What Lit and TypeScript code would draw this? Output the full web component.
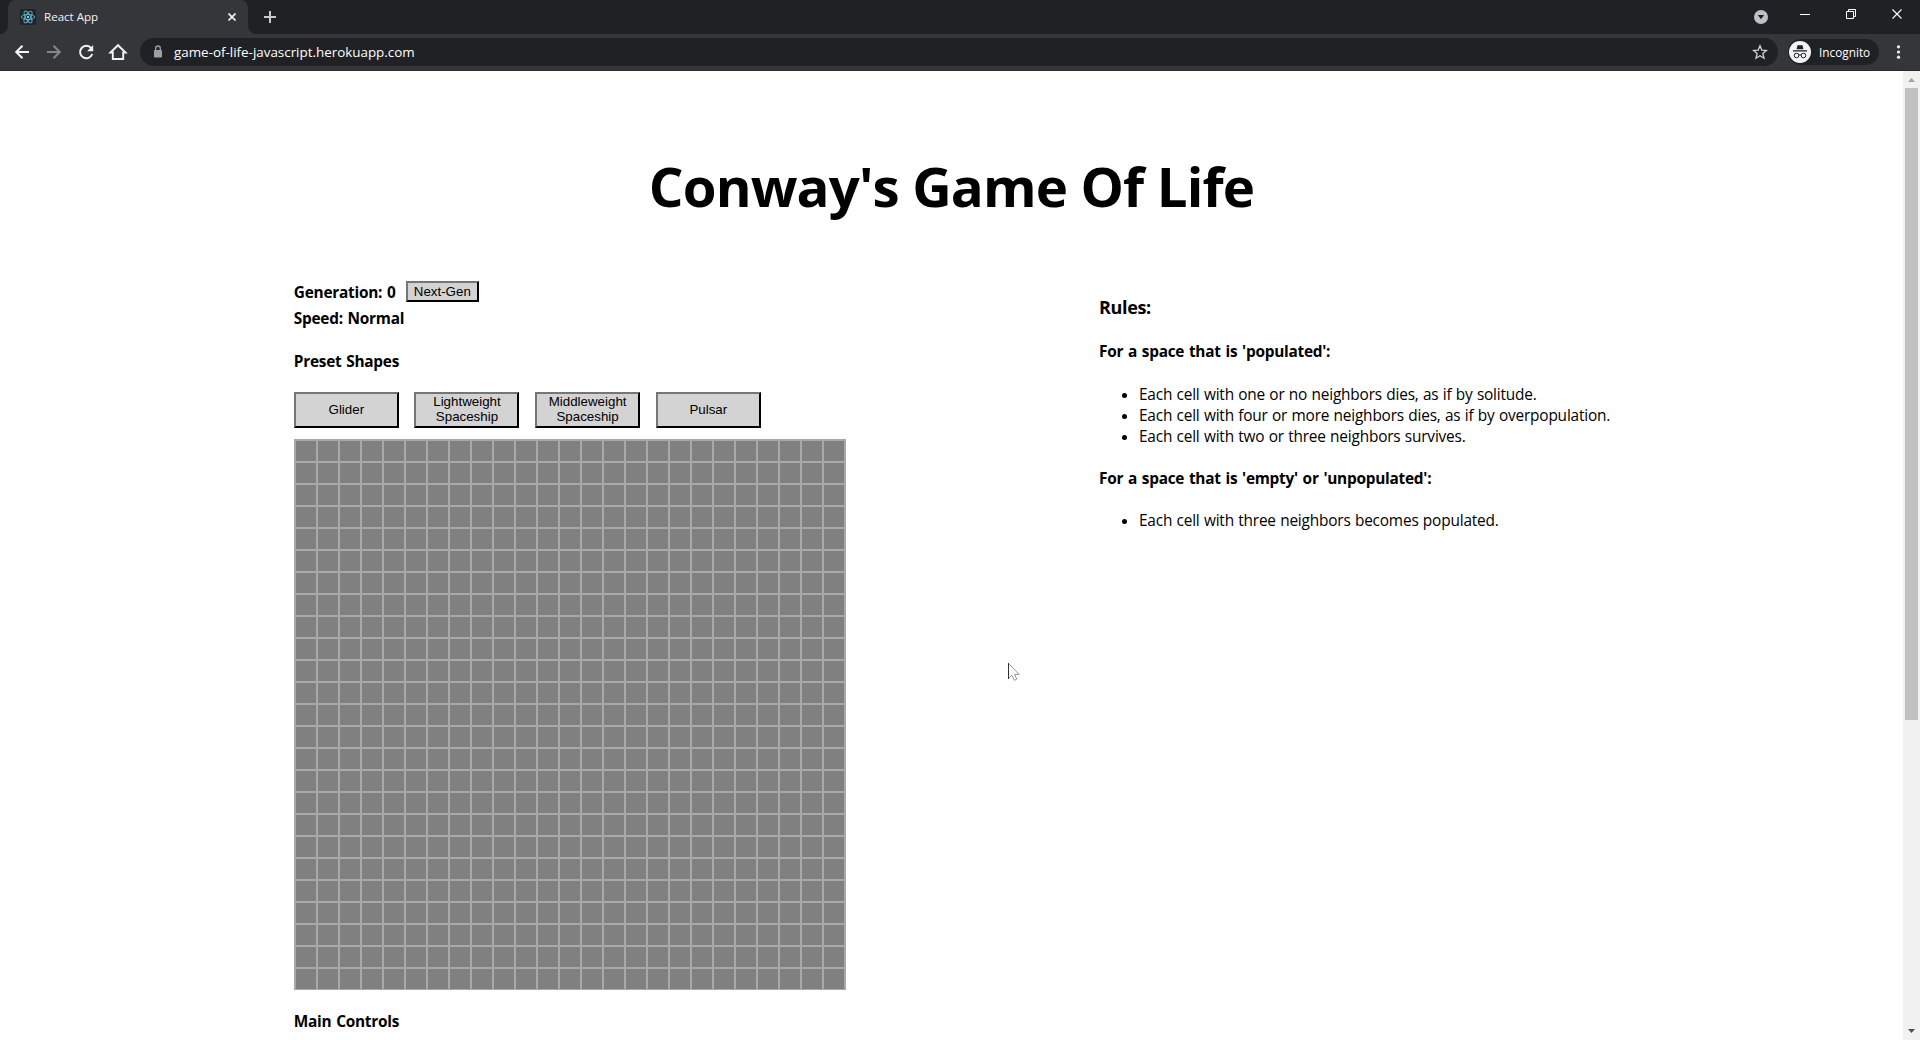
import { LitElement, html, css, svg } from "lit";
import { customElement } from "lit/decorators.js";

const SIZE = 25;

@customElement("browser-bar")
class BrowserBar extends LitElement {
  static styles = css`
    :host { display: block; font-family: "Open Sans", "Noto Sans", sans-serif; color: #fff; }
    svg { display: block; flex: none; }
    .tabs { height: 34px; background: #202124; display: flex; align-items: stretch; }
    .tab { width: 240px; margin-left: 8px; background: #35363a; border-radius: 8px 8px 0 0; display: flex; align-items: center; box-sizing: border-box; padding: 0 12px; position: relative; }
    .tab::before, .tab::after { content: ""; position: absolute; bottom: 0; width: 8px; height: 8px; }
    .tab::before { left: -8px; background: radial-gradient(circle at 0 0, #202124 7.5px, #35363a 8.5px); }
    .tab::after { right: -8px; background: radial-gradient(circle at 100% 0, #202124 7.5px, #35363a 8.5px); }
    .title { margin-left: 8px; flex: 1; font-size: 11.6px; line-height: 16px; letter-spacing: -0.02px; color: #f1f3f4; }
    .plus { align-self: center; margin-left: 15px; }
    .spacer { flex: 1; }
    .bar { height: 37px; background: #35363a; display: flex; align-items: center; box-sizing: border-box; padding: 0 0 1px 12px; box-shadow: inset 0 -1px #2b2a2d; }
    .nav { display: flex; gap: 12px; }
    .address { flex: none; margin-left: 12px; width: 1638px; height: 28px; box-sizing: border-box; border-radius: 14px; background: #202124; display: flex; align-items: center; padding: 0 10px 0 8px; }
    .url { flex: 1; margin-left: 6px; font-size: 13.4px; line-height: 18px; }
    .profile { flex: none; margin-left: 10px; width: 91px; height: 26px; box-sizing: border-box; border-radius: 13px; background: #202124; display: flex; align-items: center; padding-left: 1px; font-size: 11.8px; }
    .who { margin-left: 8px; line-height: 16px; }
    .more { margin-left: 8px; }
  `;
  render() {
    return html`
      <div class="tabs">
        <div class="tab">
          <svg width="16" height="16" viewBox="0 0 16 16">
            <rect width="16" height="16" rx="2" fill="#20232a" />
            <g fill="none" stroke="#61b5cf" stroke-width="0.9">
              ${[0, 60, 120].map((a) => svg`<ellipse cx="8" cy="8" rx="6.6" ry="2.6" transform=${`rotate(${a} 8 8)`} />`)}
            </g>
            <circle cx="8" cy="8" r="1.2" fill="#7fd6f0" />
          </svg>
          <span class="title">React App</span>
          <svg width="8" height="8" viewBox="0 0 8 8"><path d="M.5.5l7 7M7.5.5l-7 7" stroke="#f1f3f4" stroke-width="1.6" /></svg>
        </div>
        <svg class="plus" width="14" height="14" viewBox="0 0 14 14"><path d="M7 1v12M1 7h12" stroke="#c8cacd" stroke-width="2" /></svg>
        <span class="spacer"></span>
        <svg width="167" height="34" viewBox="0 0 167 34">
          <circle cx="8" cy="17" r="7" fill="#bdc1c6" />
          <path d="M4.8 15h6.4L8 19.3z" fill="#202124" />
          <path d="M47 14.5h10" stroke="#fff" />
          <path d="M93.500 11.500h7v7h-7zM95.500 11.500v-2h7v7h-2" fill="none" stroke="#fff" />
          <path d="M139.500 9.500l9 9M148.500 9.500l-9 9" stroke="#fff" stroke-width="1.1" />
        </svg>
      </div>
      <div class="bar">
        <div class="nav">
          <svg width="20" height="20" viewBox="0 0 20 20"><path d="M17 10H4.500M10.500 3.700L4.200 10l6.300 6.300" fill="none" stroke="#f1f3f4" stroke-width="2" /></svg>
          <svg width="20" height="20" viewBox="0 0 20 20"><path d="M3 10h12.500M9.500 3.700l6.300 6.300-6.300 6.300" fill="none" stroke="#85868a" stroke-width="2" /></svg>
          <svg width="20" height="20" viewBox="0 0 20 20"><path d="M15.200 6.200A6.200 6.200 0 1 0 16.200 12" fill="none" stroke="#f1f3f4" stroke-width="2" /><path d="M17.200 3v6.200H11z" fill="#f1f3f4" /></svg>
          <svg width="20" height="20" viewBox="0 0 20 20"><path d="M2.500 10.500L10 3.200l7.500 7.300h-2.300V17H4.800v-6.500z" fill="none" stroke="#f1f3f4" stroke-width="1.9" /></svg>
        </div>
        <div class="address">
          <svg width="20" height="14" viewBox="0 0 20 14"><rect x="6" y="5" width="8" height="7.500" rx="1" fill="#9aa0a6" /><path d="M7.700 6V3.300a2.300 2.300 0 0 1 4.600 0V6" fill="none" stroke="#9aa0a6" stroke-width="1.300" /></svg>
          <span class="url">game-of-life-javascript.herokuapp.com</span>
          <svg width="16" height="16" viewBox="0 0 16 16"><path d="M8 1.800l1.800 4.300 4.700.4-3.600 3.100 1.100 4.600L8 11.800l-4 2.400 1.100-4.600L1.500 6.500l4.700-.4z" fill="none" stroke="#cfd1d4" stroke-width="1.300" /></svg>
        </div>
        <div class="profile">
          <svg width="22" height="22" viewBox="0 0 22 22">
            <circle cx="11" cy="11" r="11" fill="#f1f3f4" />
            <path d="M7.500 8.300l1-3.800q.2-.7.900-.5l1.600.5 1.600-.5q.7-.2.900.5l1 3.800zM4 9.300h14v1.200H4z" fill="#202124" />
            <g fill="none" stroke="#202124" stroke-width="1"><circle cx="7.500" cy="14.500" r="2.300" /><circle cx="14.500" cy="14.500" r="2.300" /><path d="M9.800 14.200q1.200-.8 2.400 0" /></g>
          </svg>
          <span class="who">Incognito</span>
        </div>
        <svg class="more" width="22" height="20" viewBox="0 0 22 20"><g fill="#f1f3f4"><circle cx="11.500" cy="4.800" r="1.600" /><circle cx="11.500" cy="10" r="1.600" /><circle cx="11.500" cy="15.200" r="1.600" /></g></svg>
      </div>
    `;
  }
}

@customElement("life-grid")
class LifeGrid extends LitElement {
  static styles = css`
    :host { display: block; width: 552px; height: 551px; }
    .grid { display: grid; grid-template-columns: repeat(25, 20px); grid-auto-rows: 20px; gap: 2px; padding: 2px 2px 1px; background: #a9a9a9; }
    .cell { background: #808080; }
  `;
  render() {
    return html`<div class="grid">${Array.from({ length: SIZE * SIZE }, () => html`<div class="cell"></div>`)}</div>`;
  }
}

@customElement("app-root")
class AppRoot extends LitElement {
  static styles = css`
    :host { display: block; height: 1040px; overflow: hidden; background: #fff; color: #000; font-family: "Open Sans", "Noto Sans", sans-serif; font-size: 15.4px; line-height: 21px; }
    .view { display: flex; height: 969px; overflow: hidden; }
    .page { width: 1903px; flex: none; }
    h1 { margin: 77px 0 0; height: 78px; line-height: 76px; font-size: 54.600px; text-align: center; font-weight: 700; letter-spacing: -0.85px; white-space: nowrap; }
    .columns { display: flex; padding: 55px 0 0 293.800px; }
    .left { width: 552px; }
    .right { margin-left: 253.200px; width: 600px; padding-top: 14px; }
    .strong { font-weight: 700; white-space: nowrap; letter-spacing: -0.25px; word-spacing: 1px; }
    .generation { display: flex; height: 21px; }
    .generation .strong { width: 112px; padding-top: 1px; }
    button { font-family: "Liberation Sans", Arial, sans-serif; color: #000; background: #d3d3d3; border: 2px outset #000; border-color: #767676 #212121 #212121 #767676; border-radius: 0; margin: 0; padding: 0; font-size: 13.333px; line-height: 15px; }
    .next { width: 73px; height: 21px; padding-bottom: 1px; }
    .speed { margin-top: 6px; }
    .preset-title { margin-top: 22px; }
    .presets { display: flex; gap: 15.670px; margin: 20px 0 11px; }
    .preset { width: 105px; height: 36px; padding-bottom: 2px; }
    .controls { margin-top: 21px; }
    h3 { margin: 0; font-size: 18px; line-height: 25px; letter-spacing: -0.35px; }
    .populated { margin-top: 21px; }
    .empty { margin-top: 21px; }
    ul { margin: 22px 0 0; padding-left: 40px; letter-spacing: -0.18px; word-spacing: 0.5px; white-space: nowrap; }
    .empty + ul { margin-top: 21px; }
    .track { width: 17px; background: #f1f1f1; display: flex; flex-direction: column; align-items: center; }
    .thumb { width: 13px; height: 632px; background: #c1c1c1; }
    .fill { flex: 1; }
    .cursor { position: absolute; left: 1007px; top: 662px; }
    svg { display: block; }
  `;
  render() {
    return html`
      <browser-bar></browser-bar>
      <div class="view">
        <div class="page">
          <h1>Conway's Game Of Life</h1>
          <div class="columns">
            <div class="left">
              <div class="generation"><span class="strong">Generation: 0</span><button class="next">Next-Gen</button></div>
              <div class="strong speed">Speed: Normal</div>
              <div class="strong preset-title">Preset Shapes</div>
              <div class="presets">
                ${["Glider", "Lightweight Spaceship", "Middleweight Spaceship", "Pulsar"].map((p) => html`<button class="preset">${p}</button>`)}
              </div>
              <life-grid></life-grid>
              <div class="strong controls">Main Controls</div>
            </div>
            <div class="right">
              <h3>Rules:</h3>
              <div class="strong populated">For a space that is 'populated':</div>
              <ul>
                <li>Each cell with one or no neighbors dies, as if by solitude.</li>
                <li>Each cell with four or more neighbors dies, as if by overpopulation.</li>
                <li>Each cell with two or three neighbors survives.</li>
              </ul>
              <div class="strong empty">For a space that is 'empty' or 'unpopulated':</div>
              <ul><li>Each cell with three neighbors becomes populated.</li></ul>
            </div>
          </div>
        </div>
        <div class="track">
          <svg width="17" height="17" viewBox="0 0 17 17"><path d="M5 11l3.500-4 3.500 4z" fill="#a3a3a3" /></svg>
          <div class="thumb"></div>
          <div class="fill"></div>
          <svg width="17" height="17" viewBox="0 0 17 17"><path d="M5 6h7l-3.500 4z" fill="#505050" /></svg>
        </div>
      </div>
      <svg class="cursor" width="14" height="20" viewBox="0 0 14 20"><path d="M1.500 1.500v15l3.500-3.200 2.300 5 2.500-1.100-2.200-4.800h4.500z" fill="#fff" stroke="#8f95a1" /><path d="M1.500 1v16" stroke="#35304a" /></svg>
    `;
  }
}
